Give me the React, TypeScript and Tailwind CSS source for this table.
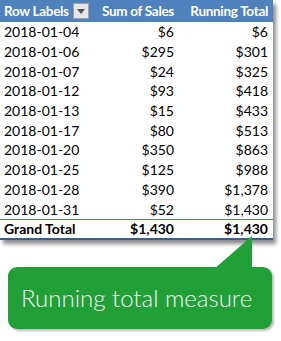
const rows: [string, string, string][] = [
  ["2018-01-04", "$6", "$6"],
  ["2018-01-06", "$295", "$301"],
  ["2018-01-07", "$24", "$325"],
  ["2018-01-12", "$93", "$418"],
  ["2018-01-13", "$15", "$433"],
  ["2018-01-17", "$80", "$513"],
  ["2018-01-20", "$350", "$863"],
  ["2018-01-25", "$125", "$988"],
  ["2018-01-28", "$390", "$1,378"],
  ["2018-01-31", "$52", "$1,430"],
];

export default function App() {
  return (
    <div className="w-[281px] h-[341px] bg-white overflow-hidden" style={{ fontFamily: "Lato, 'Noto Sans', sans-serif" }}>
      {/* Pivot table */}
      <div className="w-[273px] bg-white text-[14px] text-black shadow-[3px_4px_4px_rgba(0,0,0,0.45)]">
        <div className="flex items-center h-[22px] bg-[#4f81bd] text-white font-bold text-[13.5px] tracking-[-0.3px] whitespace-nowrap">
          <div className="w-[97px] flex items-center pl-[4px]">
            <span>Row Labels</span>
            <span className="ml-[4px] w-[16px] h-[16px] bg-[#e6e6e6] border border-[#a0a0a0] flex items-center justify-center">
              <svg width="8" height="5" viewBox="0 0 8 5"><path d="M0 0h8L4 5z" fill="#555" /></svg>
            </span>
          </div>
          <div className="w-[77px] text-right">Sum of Sales</div>
          <div className="flex-1 text-right pr-[5px]">Running Total</div>
        </div>
        {rows.map(([d, s, r]) => (
          <div key={d} className="flex items-center h-[19.7px]">
            <div className="w-[97px] pl-[4px]">{d}</div>
            <div className="w-[77px] text-right">{s}</div>
            <div className="flex-1 text-right pr-[5px]">{r}</div>
          </div>
        ))}
        <div className="flex items-center h-[21px] border-t border-[#4f81bd] border-b-2 border-b-[#365f91] font-bold">
          <div className="w-[97px] pl-[4px]">Grand Total</div>
          <div className="w-[77px] text-right">$1,430</div>
          <div className="flex-1 text-right pr-[5px]">$1,430</div>
        </div>
      </div>
      {/* Callout */}
      <div className="relative mt-[27px] ml-[8px] w-[264px]">
        <svg className="absolute left-[206px] top-[-31px]" width="40" height="33" viewBox="0 0 40 33">
          <path d="M0 33L38 0V33z" fill="#22a038" />
        </svg>
        <div className="h-[62px] rounded-[9px] bg-[#22a038] shadow-[2px_2px_2px_rgba(0,0,0,0.25)] flex items-center pl-[13px] text-[24px] font-light text-[#f4f4f4] whitespace-nowrap">
          Running total measure
        </div>
      </div>
    </div>
  );
}
